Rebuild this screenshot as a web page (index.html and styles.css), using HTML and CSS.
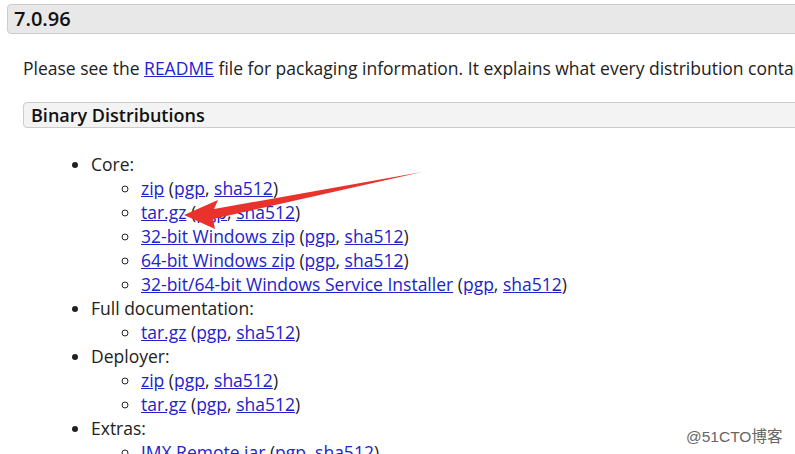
FILE: index.html
```html
<!DOCTYPE html>
<html>
<head>
<meta charset="utf-8">
<link rel="stylesheet" href="styles.css">
</head>
<body>
<div class="page">
  <h3 class="version">7.0.96</h3>
  <div class="section">
    <p class="intro">Please see the <a href="#">README</a> file for packaging information. It explains what every distribution contains.</p>
    <h4 class="sub">Binary Distributions</h4>
    <ul class="dist">
      <li>Core:
        <ul>
          <li><a href="#">zip</a> (<a href="#">pgp</a>, <a href="#">sha512</a>)</li>
          <li><a href="#">tar.gz</a> (<a href="#">pgp</a>, <a href="#">sha512</a>)</li>
          <li><a href="#">32-bit Windows zip</a> (<a href="#">pgp</a>, <a href="#">sha512</a>)</li>
          <li><a href="#">64-bit Windows zip</a> (<a href="#">pgp</a>, <a href="#">sha512</a>)</li>
          <li><a href="#">32-bit/64-bit Windows Service Installer</a> (<a href="#">pgp</a>, <a href="#">sha512</a>)</li>
        </ul>
      </li>
      <li>Full documentation:
        <ul>
          <li><a href="#">tar.gz</a> (<a href="#">pgp</a>, <a href="#">sha512</a>)</li>
        </ul>
      </li>
      <li>Deployer:
        <ul>
          <li><a href="#">zip</a> (<a href="#">pgp</a>, <a href="#">sha512</a>)</li>
          <li><a href="#">tar.gz</a> (<a href="#">pgp</a>, <a href="#">sha512</a>)</li>
        </ul>
      </li>
      <li>Extras:
        <ul>
          <li><a href="#">JMX Remote jar</a> (<a href="#">pgp</a>, <a href="#">sha512</a>)</li>
        </ul>
      </li>
    </ul>
  </div>
</div>
<svg class="arrow" width="795" height="454" viewBox="0 0 795 454">
  <path d="M422 172 L214 209 L218 200 L184 215 L215 229 L213 219 Z" fill="#e8322b"/>
</svg>
<div class="watermark">@51CTO博客</div>
</body>
</html>
```
FILE: styles.css
```css
html, body {
  margin: 0;
  padding: 0;
  background: #fff;
  overflow: hidden;
}
body {
  font-family: "Open Sans", "Liberation Sans", sans-serif;
  color: #222;
  font-size: 17.5px;
}
.page {
  width: 1000px;
  padding: 4px 0 0 7px;
}
.version {
  margin: 0;
  height: 30px;
  box-sizing: border-box;
  background: #e8e8e8;
  border: 1px solid #cccccc;
  border-radius: 4px;
  font-size: 20px;
  font-weight: 600;
  line-height: 28px;
  padding: 0 6px;
  color: #111;
}
.section {
  padding-left: 16px;
}
.intro {
  margin: 20px 0 0 0;
  line-height: 28px;
  white-space: nowrap;
}
.sub {
  margin: 20px 0 0 0;
  height: 26px;
  box-sizing: border-box;
  background: #f3f3f3;
  border: 1px solid #cccccc;
  border-radius: 4px;
  font-size: 18px;
  font-weight: 600;
  line-height: 24px;
  padding: 0 7px;
  color: #111;
}
a {
  color: #2222cc;
  text-decoration: underline;
}
.dist {
  margin: 24px 0 0 0;
  padding-left: 68px;
  line-height: 24px;
  list-style: disc;
}
.dist ul {
  margin: 0;
  padding-left: 50px;
  list-style: circle;
}
.arrow {
  position: absolute;
  left: 0;
  top: 0;
  pointer-events: none;
}
.watermark {
  position: absolute;
  left: 686px;
  top: 424px;
  font-family: "Liberation Sans", "Noto Sans CJK SC", sans-serif;
  font-size: 15.5px;
  color: #666;
}
```
